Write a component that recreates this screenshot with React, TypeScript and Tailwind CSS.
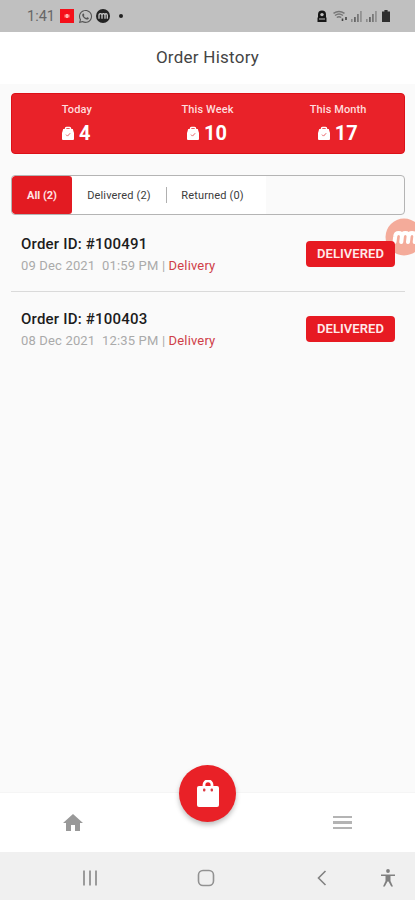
import type { ReactNode } from "react"
import { FaWhatsapp } from "react-icons/fa"
import { MdHome } from "react-icons/md"

const stats = [
  { label: "Today", count: 4 },
  { label: "This Week", count: 10 },
  { label: "This Month", count: 17 },
]

const orders = [
  { id: "100491", date: "09 Dec 2021", time: "01:59 PM" },
  { id: "100403", date: "08 Dec 2021", time: "12:35 PM" },
]

function Signal() {
  return (
    <svg viewBox="0 0 12 12" className="h-3 w-3" fill="#666">
      <rect x="0" y="9" width="1.6" height="3" opacity=".6" />
      <rect x="3" y="7" width="1.8" height="5" />
      <rect x="6" y="4" width="1.8" height="8" opacity=".8" />
      <rect x="9" y="1" width="1.8" height="11" opacity=".5" />
    </svg>
  )
}

function StatusBar() {
  return (
    <div className="flex h-8 items-center justify-between bg-[#c0c0c0] pl-[27px] pr-[25px]">
      <div className="flex items-center">
        <span className="w-[33px] pt-[2px] text-[14.5px] leading-none text-[#666]">1:41</span>
        <svg viewBox="0 0 14 14" className="h-3.5 w-3.5">
          <rect width="14" height="14" fill="#f5101a" />
          <path d="M4.5 5.5h5v3h-5z" fill="#ff8a86" />
          <path d="M6 5h2v4H6z" fill="#ffb4af" />
        </svg>
        <FaWhatsapp className="ml-[4px] h-[15px] w-[15px] text-[#555]" />
        <svg viewBox="0 0 14 14" className="ml-[3px] h-3.5 w-3.5">
          <circle cx="7" cy="7" r="7" fill="#222" />
          <path
            d="M3 10V6.500Q3 5 4.500 5t1.500 1.500V10M6 6.500Q6 5 7.500 5T9 6.500V10M9 6.500Q9 5 10 5t1.300 1.500V10"
            transform="translate(0 -.3)"
            fill="none"
            stroke="#ccc"
            strokeWidth="1.3"
          />
        </svg>
        <span className="ml-[9px] h-1 w-1 rounded-full bg-[#222]" />
      </div>
      <div className="flex items-center">
        <svg viewBox="0 0 10 12" className="h-3 w-[10px]">
          <path d="M1 7V4.500a4 4 0 0 1 8 0V7l.5 1v4H.5V8z" fill="#161616" />
          <circle cx="5" cy="4.6" r="1.7" fill="#c0c0c0" />
          <path d="M2 9h6" stroke="#c0c0c0" />
        </svg>
        <svg viewBox="0 0 15 12" className="ml-[6px] h-3 w-[15px]" fill="none" stroke="#777">
          <path d="M.5 3.300Q6 -.5 11.500 3.300M2 5.500q4-2.800 8 0M3.800 7.500q2.200-1.500 4.400 0" strokeWidth="1.5" />
          <path d="M9.500 8.500V11M13 7v3" stroke="#444" strokeWidth="1.6" />
        </svg>
        <div className="ml-[3px]">
          <Signal />
        </div>
        <div className="ml-[3px]">
          <Signal />
        </div>
        <svg viewBox="0 0 8 12" className="ml-[4px] h-3 w-2" fill="#2e2e2e">
          <path d="M2.400 0h3.200v1.400H8V12H0V1.400h2.400z" />
        </svg>
      </div>
    </div>
  )
}

function CheckBag() {
  return (
    <svg viewBox="0 0 12 14" className="h-3.5 w-3" fill="none">
      <path d="M3.500 4V2.500q0-1 1-1h3q1 0 1 1V4" stroke="#fff" strokeWidth="1.5" />
      <path d="M1.200 3h9.600L12 7v6a1 1 0 0 1-1 1H1a1 1 0 0 1-1-1V7z" fill="#fff" />
      <path d="M4 8.600l1.500 1.500 2.700-2.900" stroke="#e9646a" strokeWidth="1" />
    </svg>
  )
}

function Stats() {
  return (
    <div className="ml-[11px] mr-[10px] grid h-[61px] grid-cols-3 rounded-[4px] border border-[#dc1018] bg-[#e92229] text-white">
      {stats.map((s) => (
        <div key={s.label} className="flex flex-col items-center pt-[8px]">
          <span className="pr-px text-[11px] font-medium leading-[15px] tracking-[0.1px] text-[#ffdcdc]">
            {s.label}
          </span>
          <span className="mt-[4px] flex items-center gap-[5px] pr-[2px] text-[20px] font-bold leading-[24px]">
            <CheckBag />
            {s.count}
          </span>
        </div>
      ))}
    </div>
  )
}

function Tabs() {
  return (
    <div className="ml-[11px] mr-[10px] mt-[21px] flex h-10 overflow-hidden rounded-[4px] border border-[#b4b4b4] text-[11px] leading-none tracking-[0.15px] text-[#3c3c3c]">
      <div className="bg-white">
        <div className="flex h-full w-[60px] items-center justify-center rounded-[3px] bg-[#e31b22] font-bold tracking-normal text-[#ffe4e4]">
          All (2)
        </div>
      </div>
      <div className="flex w-[194px] items-center bg-white">
        <span className="w-[94px] text-center">Delivered (2)</span>
        <span className="h-4 w-px bg-[#b0b0b0]" />
        <span className="w-[91px] text-center">Returned (0)</span>
      </div>
    </div>
  )
}

function OrderRow({ id, date, time }: { id: string; date: string; time: string }) {
  return (
    <div className="ml-[11px] mr-[10px] flex h-[75px] justify-between px-[10px]">
      <div className="pt-[17px]">
        <div className="text-[15px] font-medium leading-5 tracking-[0.2px] text-[#1c1c1c]">Order ID: #{id}</div>
        <div className="mt-[3px] whitespace-pre text-[13px] leading-[18px] tracking-[0.16px] text-[#aaa]">
          {date}
          {"  "}
          {time} | <span className="text-[#cf4048]">Delivery</span>
        </div>
      </div>
      <div className="z-10 mt-[24px] flex h-[26px] w-[89px] items-center justify-center rounded-[4px] bg-[#e71a22] text-[13px] font-semibold tracking-[0.05px] text-[#ffe9e9]">
        DELIVERED
      </div>
    </div>
  )
}

// floating recorder button, half off the right edge
function RecorderBubble() {
  return (
    <svg viewBox="0 0 38 38" className="absolute left-[385px] top-[218px] h-[38px] w-[38px]">
      <circle cx="19" cy="19" r="18.5" fill="#f4ab9a" />
      <path
        d="M9.500 24l.7-5.500q.3-3.500 3.500-3.500t3.200 3.500L16.300 24M16.900 18.500q.3-3.500 3.500-3.500t3.200 3.500L23 24M23.600 18.500q.3-3.500 3.500-3.500t3.200 3.500L29.700 24"
        fill="none"
        stroke="#fff"
        strokeWidth="4"
        strokeLinecap="round"
        strokeLinejoin="round"
      />
    </svg>
  )
}

function NavCell({ className, children }: { className: string; children: ReactNode }) {
  return <div className={"flex h-full items-center justify-center " + className}>{children}</div>
}

function BottomNav() {
  return (
    <div className="relative flex h-[59px] bg-white shadow-[0_-1px_1px_#f5f5f5]">
      <NavCell className="w-[146px]">
        <MdHome className="h-6 w-6 text-[#999]" />
      </NavCell>
      <div className="flex-1" />
      <NavCell className="w-[145px]">
        <div className="flex w-[19px] flex-col gap-[3px]">
          <span className="h-[2.5px] bg-[#b4b4b4]" />
          <span className="h-[2.5px] bg-[#b4b4b4]" />
          <span className="h-[2.5px] bg-[#b4b4b4]" />
        </div>
      </NavCell>
      <div className="absolute -top-[28px] left-[179px] flex h-[57px] w-[57px] items-center justify-center rounded-full bg-[#e92127] shadow-[0_3px_5px_rgba(0,0,0,0.25)]">
        <svg viewBox="0 0 22 27" className="h-[27px] w-[22px]">
          <path d="M7 8V4.800a4 4 0 0 1 8 0V8" fill="none" stroke="#fff" strokeWidth="2.8" />
          <rect y="6" width="22" height="21" rx="2" fill="#fff" />
          <rect x="6" y="8.5" width="2.4" height="3" rx="1" fill="#dc3a42" />
          <rect x="13.6" y="8.5" width="2.4" height="3" rx="1" fill="#dc3a42" />
        </svg>
      </div>
    </div>
  )
}

function SystemNav() {
  return (
    <div className="flex h-12 items-center bg-[#f0f0f0] pt-[3px]">
      <svg viewBox="0 0 16 16" className="ml-[82px] h-4 w-4" stroke="#929292" strokeWidth="1.8">
        <path d="M2 .5v15M8 .5v15M14 .5v15" />
      </svg>
      <svg viewBox="0 0 18 18" className="ml-[99px] h-[18px] w-[18px]" fill="none" stroke="#929292" strokeWidth="1.6">
        <rect x="1.5" y="1.5" width="15" height="15" rx="4.5" />
      </svg>
      <svg viewBox="0 0 10 16" className="ml-[102px] h-4 w-[10px]" fill="none" stroke="#828282" strokeWidth="1.6">
        <path d="M8.500 1L1.500 8l7 7" />
      </svg>
      <svg viewBox="0 0 16 18" className="ml-[53px] h-[18px] w-4" fill="#808080">
        <circle cx="8" cy="2" r="1.9" />
        <path d="M1 5.500h14v1.600h-4.500V12l2.500 5.500h-1.800L8.500 12.500h-1L4.800 17.500H3L5.500 12V7.100H1z" />
      </svg>
    </div>
  )
}

export default function App() {
  return (
    <div className="relative flex h-[900px] w-[415px] flex-col overflow-hidden bg-[#fafafa] font-['Roboto',sans-serif]">
      <StatusBar />
      <div className="flex h-[52px] items-center justify-center bg-white text-[17px] tracking-[0.25px] text-[#444]">
        Order History
      </div>
      <div className="flex-1 pt-[9px]">
        <Stats />
        <Tabs />
        <div className="pt-[2px]">
          {orders.map((o, i) => (
            <div key={o.id}>
              {i > 0 && <div className="-mt-px ml-[11px] mr-[10px] h-px bg-[#dadada]" />}
              <OrderRow {...o} />
            </div>
          ))}
        </div>
      </div>
      <BottomNav />
      <SystemNav />
      <RecorderBubble />
    </div>
  )
}
